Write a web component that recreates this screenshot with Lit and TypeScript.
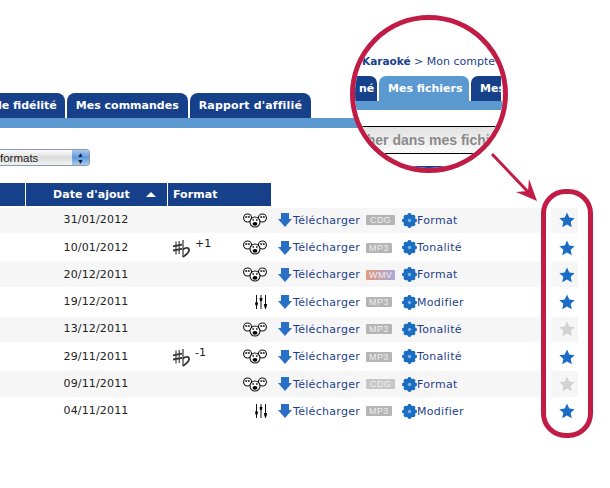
import { LitElement, html, css, svg } from "lit";
import { customElement } from "lit/decorators.js";

const rows = [
  { d: "31/01/2012", t: "", i: "k", f: "CDG", a: "Format", s: 1, dim: false },
  { d: "10/01/2012", t: "+1", i: "k", f: "MP3", a: "Tonalité", s: 1, dim: false },
  { d: "20/12/2011", t: "", i: "k", f: "WMV", a: "Format", s: 1, dim: false },
  { d: "19/12/2011", t: "", i: "m", f: "MP3", a: "Modifier", s: 1, dim: false },
  { d: "13/12/2011", t: "", i: "k", f: "MP3", a: "Tonalité", s: 0, dim: false },
  { d: "29/11/2011", t: "-1", i: "k", f: "MP3", a: "Tonalité", s: 1, dim: false },
  { d: "09/11/2011", t: "", i: "k", f: "CDG", a: "Format", s: 0, dim: true },
  { d: "04/11/2011", t: "", i: "m", f: "MP3", a: "Modifier", s: 1, dim: false },
];

const faces = html`<svg width="24" height="15" viewBox="0 0 24 15">
  <g fill="#fff" stroke="#111" stroke-width="1.1">
    <circle cx="4.6" cy="5" r="4"/><circle cx="19.4" cy="5" r="4"/><circle cx="12" cy="9" r="5"/>
  </g>
  <g fill="#333">
    <circle cx="3.2" cy="4" r="1.1"/><circle cx="5.8" cy="4" r="1.1"/><circle cx="18.2" cy="4" r="1.1"/><circle cx="20.8" cy="4" r="1.1"/>
    <circle cx="10.2" cy="7" r=".9"/><circle cx="13.8" cy="7" r=".9"/><ellipse cx="12" cy="10.8" rx="2.4" ry="1.9" fill="#000"/>
  </g>
</svg>`;
const mixer = html`<svg width="12" height="14" viewBox="0 0 12 14">
  <g stroke="#111" stroke-width="1"><path d="M1.5 0v14M6 0v14M10.5 0v14"/></g>
  <g fill="#000"><path d="M0 7.5h3l-.5 3h-2zM4.5 3h3l-.5 3H5zM9 9h3l-.5 3.5h-2z"/></g>
</svg>`;
const tone = html`<svg class="tone-ic" width="18" height="18" viewBox="0 0 18 18">
  <g fill="none" stroke="#333">
    <path d="M3 1.5v13M6.2 1v13" stroke-width="1.1"/>
    <path d="M0 6.3l9-1.6M0 10.5l9-1.6" stroke-width="1.8"/>
    <path d="M10 0v17" stroke-width="1.2"/>
    <path d="M10 9.5c2.5-2 6-2.3 6 .5 0 3-3.4 5-6 7" stroke-width="1.8"/>
  </g>
</svg>`;
const down = html`<svg class="dl" width="14" height="14" viewBox="0 0 14 14"><path d="M3 0h8v6h3L7 14 0 6h3z" fill="#2a6fc6"/></svg>`;
const teeth = [0, 45, 90, 135, 180, 225, 270, 315];
const gear = html`<svg class="gear" width="15" height="15" viewBox="0 0 15 15">
  ${teeth.map((a) => svg`<rect x="5.7" y=".3" width="3.6" height="14.4" rx="1.4" fill="#1b6dc1" transform="rotate(${a} 7.5 7.5)"/>`)}
  <circle cx="7.5" cy="7.5" r="6" fill="#1b6dc1"/><circle cx="7.5" cy="7.5" r="1.7" fill="#7fb2e4"/>
</svg>`;
const star = (on: number) => html`<svg width="16" height="16" viewBox="0 0 24 24"><path d="M12 .8l3.4 7.5 8.1.9-6 5.5 1.7 8.1L12 18.7l-7.2 4.1 1.7-8.1-6-5.5 8.1-.9z" fill="${on ? "#1a6cc4" : "#d2d2d2"}"/></svg>`;

@customElement("app-root")
export class AppRoot extends LitElement {
  static styles = css`
    :host { display: block; position: relative; width: 610px; height: 488px; overflow: hidden; background: #fff;
      font-family: "DejaVu Sans", Verdana, sans-serif; font-size: 11px; color: #1e3f8a; }
    .page { padding-top: 93px; }
    .tabs { display: flex; gap: 2px; width: 311px; justify-content: flex-end; height: 25px; overflow: hidden; }
    .tab { flex: none; box-sizing: border-box; height: 25px; background: #17408b; color: #fff; font-weight: 700; font-size: 11px;
      line-height: 25px; padding: 0 9px; border-radius: 8px 8px 0 0; white-space: nowrap; }
    .tab.wide { letter-spacing: .15px; }
    .tab.first { padding: 0 8px 0 0; border-radius: 0 8px 0 0; }
    .bar { height: 10px; width: 400px; background: #5b99d0; }
    .select { box-sizing: border-box; margin-top: 21px; width: 90px; height: 17px; display: flex; justify-content: space-between; align-items: center;
      background: linear-gradient(#fdfdfd, #dcdcdc 50%, #f3f3f3); border: 1px solid #8a9ab0; border-left: 0; border-radius: 0 4px 4px 0;
      font-family: "Liberation Sans", Arial, sans-serif; font-size: 11.5px; color: #222; }
    .stepper { width: 17px; height: 15px; background: linear-gradient(#a9c9ee, #5f9ade 50%, #a6c9ee); border-radius: 0 3px 3px 0;
      color: #123; font-size: 7px; line-height: 7px; text-align: center; display: flex; flex-direction: column; justify-content: center; }
    .thead { margin-top: 17px; display: flex; gap: 1px; height: 23px; color: #fff; font-weight: 700; font-size: 11px; line-height: 23px; letter-spacing: .05px; }
    .th { background: #17408b; box-sizing: border-box; flex: none; }
    .th.a { width: 25px; }
    .th.b { width: 141px; padding: 0 11px 0 27px; display: flex; justify-content: space-between; align-items: center; }
    .th.c { width: 103px; padding-left: 5px; }
    .caret { width: 0; height: 0; border: 5px solid transparent; border-top: 0; border-bottom: 5px solid #fff; }
    .tbody { margin-top: .6px; }
    .row { display: flex; height: 25.3px; padding: 1px 0; }
    .main { width: 540px; display: grid; grid-template-columns: 168px 72px 27px 11px 15px 73px 36px 15px 1fr; align-items: center; }
    .side { margin-left: 11px; box-sizing: border-box; width: 27px; display: flex; align-items: center; padding-left: 8px; }
    .row:nth-child(odd) .main, .row:nth-child(odd) .side { background: #f6f6f6; }
    .date { color: #222; text-align: center; padding-left: 24px; font-size: 11px; letter-spacing: .15px; margin-top: -1px; }
    .tone { display: flex; align-items: flex-start; gap: 4px; padding-left: 5px; color: #222; }
    .tone-ic { display: block; margin-top: 2px; }
    .num { line-height: 11px; }
    .ic { display: flex; justify-content: flex-end; align-items: center; }
    .dl, .gear { display: block; }
    .link { color: #1e3f8a; font-size: 11px; white-space: nowrap; letter-spacing: .3px; }
    .badge { justify-self: start; box-sizing: border-box; height: 10px; line-height: 10px; padding: 0 3px; background: #b5b5b5; color: #eee;
      font-family: "Liberation Sans", Arial, sans-serif; font-size: 9px; border-radius: 1px; letter-spacing: .4px; }
    .badge.CDG { padding: 0 4px; }
    .badge.WMV { background: linear-gradient(90deg, #e39a7a, #a8a8e0); }
    .badge.dim { background: #c8c8c8; }
    .lens { position: absolute; left: 350px; top: 15px; box-sizing: border-box; width: 158px; height: 158px; border-radius: 50%;
      border: 5px solid #c01c45; background: #fff; overflow: hidden; }
    .lens-in { width: 148px; padding-top: 33px; }
    .crumb { padding-left: 7px; height: 23px; line-height: 17px; white-space: nowrap; font-size: 11px; }
    .crumb b { color: #17408b; font-size: 10.5px; }
    .ltabs { display: flex; gap: 2px; height: 25px; width: 148px; overflow: hidden; margin-left: -2px; }
    .ltab { flex: none; height: 25px; line-height: 25px; box-sizing: border-box; background: #17408b; color: #fff; font-weight: 700; padding: 0 9px; border-radius: 7px 7px 0 0; }
    .ltab.cur { background: #5b99d0; width: 90px; padding: 0 0 0 9px; }
    .ltab.l { border-radius: 0 7px 0 0; padding: 0 8px 0 6px; width: 24px; }
    .lbar { height: 9px; background: #5b99d0; }
    .search { margin-top: 16px; height: 26px; border-top: 1px solid #000; border-bottom: 1px solid #000; padding-left: 4px;
      background: linear-gradient(#e2e2e2, #fafafa); color: #8a8a8a; font: 700 14px/26px "Liberation Sans", Arial, sans-serif; white-space: nowrap; overflow: hidden; }
    .lblue { margin: 12px 0 0 50px; width: 50px; height: 8px; background: #17408b; }
    .overlay { position: absolute; left: 0; top: 0; pointer-events: none; }
  `;

  render() {
    return html`<div class="page">
        <div class="tabs">
          <div class="tab first">de fidélité</div>
          <div class="tab">Mes commandes</div>
          <div class="tab wide">Rapport d'affilié</div>
        </div>
        <div class="bar"></div>
        <div class="select"><span>formats</span><span class="stepper"><span>▲</span><span>▼</span></span></div>
        <div class="thead">
          <div class="th a"></div>
          <div class="th b"><span>Date d'ajout</span><span class="caret"></span></div>
          <div class="th c">Format</div>
        </div>
        <div class="tbody">
          ${rows.map(
            (r) => html`<div class="row">
              <div class="main">
                <div class="date">${r.d}</div>
                <div class="tone">${r.t ? html`${tone}<span class="num">${r.t}</span>` : ""}</div>
                <div class="ic">${r.i === "k" ? faces : mixer}</div>
                <div></div>
                ${down}
                <span class="link">Télécharger</span>
                <span class="badge ${r.f} ${r.dim ? "dim" : ""}">${r.f}</span>
                ${gear}
                <span class="link">${r.a}</span>
              </div>
              <div class="side">${star(r.s)}</div>
            </div>`
          )}
        </div>
      </div>
      <div class="lens">
        <div class="lens-in">
          <div class="crumb"><b>Karaoké</b> &gt; Mon compte</div>
          <div class="ltabs">
            <div class="ltab l">né</div>
            <div class="ltab cur">Mes fichiers</div>
            <div class="ltab">Mes</div>
          </div>
          <div class="lbar"></div>
          <div class="search">cher dans mes fichiers</div>
          <div class="lblue"></div>
        </div>
      </div>
      <svg class="overlay" width="610" height="488" viewBox="0 0 610 488">
        <path d="M492 154L532 196" stroke="#c01c45" stroke-width="3" fill="none"/>
        <path d="M537 201L516 192 528 191 529 179z" fill="#c01c45"/>
        <rect x="543.5" y="191.5" width="47" height="244" rx="22" fill="none" stroke="#c01c45" stroke-width="5"/>
      </svg>`;
  }
}
